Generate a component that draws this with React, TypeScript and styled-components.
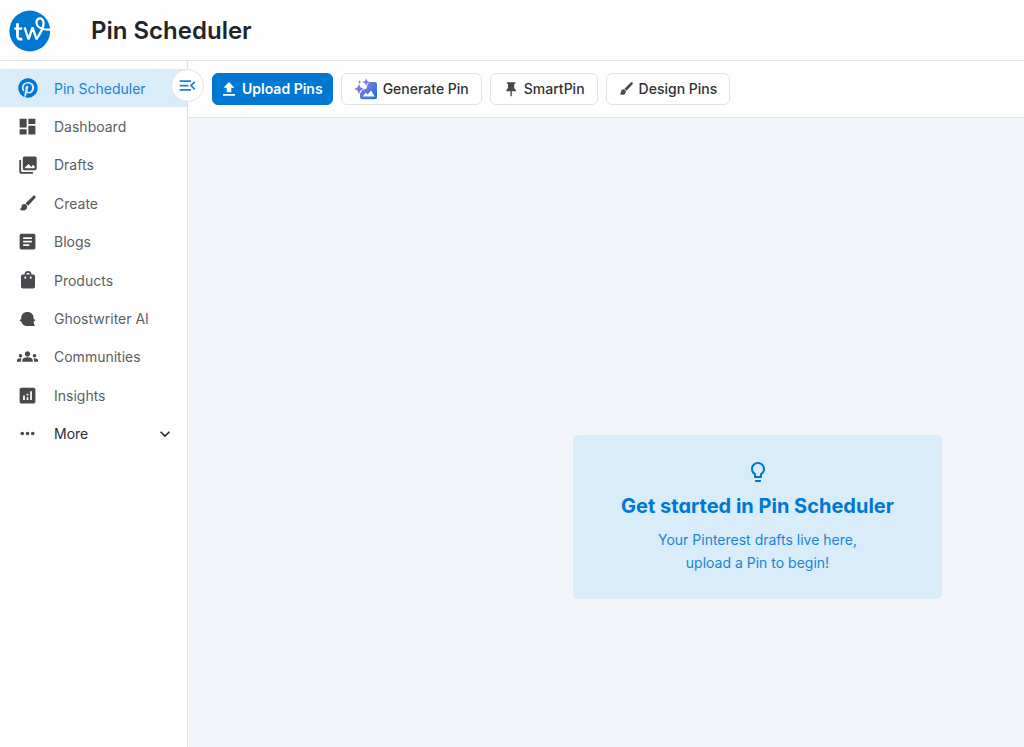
import React from "react";
import styled, { createGlobalStyle, css } from "styled-components";
import {
  MdAnalytics,
  MdArticle,
  MdDashboard,
  MdGroups,
  MdKeyboardArrowDown,
  MdMenuOpen,
  MdMoreHoriz,
  MdOutlineLightbulb,
} from "react-icons/md";
import { FaPinterest } from "react-icons/fa";

const blue = "#0077d0";
const paleBlue = "#d8ecfa";
const line = "#dfe2e6";
const iconGrey = "#47494c";

const GlobalStyle = createGlobalStyle`
  *, *::before, *::after { box-sizing: border-box; }
  body {
    margin: 0;
    background: #fefefe;
    color: #222528;
    font-family: Inter, "Liberation Sans", sans-serif;
    font-size: 14px;
    -webkit-font-smoothing: antialiased;
  }
  svg { display: block; flex: none; }
`;

const Page = styled.div`
  min-height: 100vh;
  display: flex;
  flex-direction: column;
`;

const Header = styled.header`
  height: 61px;
  padding: 1px 0 0 9px;
  display: flex;
  align-items: center;
  gap: 40px;
  border-bottom: 1px solid ${line};
`;

const PageTitle = styled.h1`
  margin: 0;
  font-size: 24px;
  line-height: 32px;
  font-weight: 600;
  font-feature-settings: "cv11";
`;

const Body = styled.div`
  flex: 1;
  display: flex;
`;

const Sidebar = styled.aside`
  position: relative;
  flex: none;
  width: 188px;
  padding-top: 8px;
  border-right: 1px solid ${line};
`;

const NavList = styled.ul`
  margin: 0;
  padding: 0;
  list-style: none;
  height: 384px;
  display: grid;
  grid-auto-rows: 1fr;
`;

const navRow = css`
  width: 100%;
  height: 100%;
  padding: 0 12px 0 17px;
  display: flex;
  align-items: center;
  gap: 16px;
  font: inherit;
  text-align: left;
  text-decoration: none;
  border: 0;
`;

const NavLink = styled.a<{ $active?: boolean }>`
  ${navRow}
  color: ${(p) => (p.$active ? "#1a84d5" : "#5b5e61")};
  background: ${(p) => (p.$active ? paleBlue : "transparent")};
`;

const NavButton = styled.button`
  ${navRow}
  color: #2c2e31;
  background: transparent;
  cursor: pointer;
`;

const NavIcon = styled.span<{ $active?: boolean }>`
  width: 21px;
  display: flex;
  justify-content: center;
  color: ${(p) => (p.$active ? blue : iconGrey)};
`;

const NavLabel = styled.span`
  flex: 1;
`;

const CollapseButton = styled.button`
  position: absolute;
  top: 8px;
  right: -17px;
  width: 33px;
  height: 33px;
  padding: 0;
  display: flex;
  align-items: center;
  justify-content: center;
  color: #1a84d5;
  background: #fff;
  border: 1px solid ${line};
  border-radius: 50%;
  cursor: pointer;
`;

const Content = styled.div`
  flex: 1;
  min-width: 0;
  display: flex;
  flex-direction: column;
`;

const Toolbar = styled.div`
  padding: 12px 24px;
  display: flex;
  gap: 8px;
  border-bottom: 1px solid ${line};
`;

const ToolButton = styled.button<{ $primary?: boolean }>`
  height: 32px;
  padding: 0 ${(p) => (p.$primary ? 9 : 12)}px 1px;
  display: flex;
  align-items: center;
  gap: ${(p) => (p.$primary ? 6 : 5)}px;
  font: inherit;
  font-weight: ${(p) => (p.$primary ? 600 : 500)};
  white-space: nowrap;
  color: ${(p) => (p.$primary ? "#fff" : "#2f3235")};
  background: ${(p) => (p.$primary ? blue : "#fff")};
  border: 1px solid ${(p) => (p.$primary ? blue : line)};
  border-radius: 6px;
  cursor: pointer;

  svg { color: ${(p) => (p.$primary ? "#fff" : iconGrey)}; }
`;

const Board = styled.main`
  flex: 1;
  padding: 317px 82px 40px 24px;
  display: flex;
  align-items: flex-start;
  justify-content: flex-end;
  background: #f2f5f9;
`;

const EmptyCard = styled.section`
  width: 369px;
  padding: 25px 24px;
  display: flex;
  flex-direction: column;
  align-items: center;
  text-align: center;
  color: ${blue};
  background: ${paleBlue};
  border-radius: 5px;
`;

const CardTitle = styled.h2`
  margin: 8px 0;
  font-size: 20px;
  line-height: 28px;
  font-weight: 700;
  font-feature-settings: "cv11";
`;

const CardText = styled.p`
  margin: 0;
  line-height: 23px;
  color: #1a84d5;
`;

const Logo = () => (
  <svg width="42" height="42" viewBox="0 0 42 42" role="img" aria-label="Tailwind">
    <circle cx="20.800" cy="21" r="20.400" fill={blue} />
    <g fill="none" stroke="#fff" strokeWidth="2.800" strokeLinejoin="round">
      <path d="M8.500 13.300v12.300c0 3.200 1.600 4 4.800 3.300" />
      <path d="M5.300 18.600h7.900" strokeWidth="2.400" />
      <path d="M15.600 17.300l3.700 11.400h.5l3.500-10.500h.5l3.500 10.500h.5C31 24 34.700 18.500 34.600 13.300c0-3.500-2-5.200-4.200-4.800-3 .5-3.700 4.200-2.100 7 2 3.300 6 4.200 12.700 4.200" strokeWidth="2.300" />
    </g>
  </svg>
);

const BrushIcon = ({ size }: { size: number }) => (
  <svg width={size} height={size} viewBox="0 0 24 24" fill="currentColor">
    <path d="M21.600 2.500c.8.8.8 1.900.1 2.700l-9.600 10.300-3.400-3.300L18.900 2.500c.8-.8 1.900-.8 2.700 0z" />
    <path d="M7.100 13.300c2.100 0 3.800 1.700 3.800 3.800 0 2.900-2.300 5-5.300 5-1.900 0-3.500-.8-4.600-2.100 1.500 0 2.300-1.100 2.300-2.900 0-2.100 1.700-3.800 3.800-3.800z" />
  </svg>
);

const DraftsIcon = () => (
  <svg width="20" height="20" viewBox="0 0 20 20" fill="currentColor">
    <path fillRule="evenodd" d="M6.500 1.500h10.500a1.700 1.700 0 0 1 1.700 1.700v10.300a1.700 1.700 0 0 1-1.700 1.700H6.500a1.700 1.700 0 0 1-1.700-1.700V3.200a1.700 1.700 0 0 1 1.700-1.700zM7 13.200h9.700v-1.600l-1.600-1.800-1.800 2.200-2.600-3-3.700 3.300z" />
    <path d="M1.300 5h1.800v11.900H15v1.800H3a1.700 1.700 0 0 1-1.700-1.700z" />
  </svg>
);

const BagIcon = () => (
  <svg width="20" height="20" viewBox="0 0 20 20" fill="currentColor">
    <path fillRule="evenodd" d="M6.500 4.500a3.500 3.500 0 0 1 7 0h1.800A1.700 1.700 0 0 1 17 6.200v10.600a1.700 1.700 0 0 1-1.700 1.700H4.700A1.700 1.700 0 0 1 3 16.800V6.200A1.700 1.700 0 0 1 4.700 4.500zm1.700 0h3.600a1.800 1.800 0 0 0-3.600 0zM6.500 6.500v2.200h1.600V6.500zm5.400 0v2.200h1.600V6.500z" />
  </svg>
);

const GhostIcon = () => (
  <svg width="20" height="20" viewBox="0 0 20 20" fill="currentColor">
    <path d="M9.400 3c3.800 0 6.200 2.500 6.200 5.900v1.300l1.300.4c.5.200.5.700.2 1l-1.500 1.200c0 1.300.3 2.300 1 3.200.3.500 0 .9-.5.900H9c-2.700 0-4.800-1.300-5.500-4.200l-1.600-.9c-.5-.3-.4-1 .1-1.100l1.200-.4V8.900c0-3.400 2.500-5.900 6.200-5.900z" />
  </svg>
);

const PinIcon = () => (
  <svg width="16" height="16" viewBox="0 0 16 16" fill="currentColor">
    <path d="M3.800 1.200h8.600v1.600h-1.200v4.200l1.700 1.900v1.400H8.800v4.400L8.100 15.400l-.7-.7v-4.400H3.300V8.900L5 7V2.800H3.800z" />
  </svg>
);

const GenerateIcon = () => (
  <svg width="24" height="22" viewBox="0 0 24 22">
    <defs>
      <linearGradient id="generate-fill" x1="0" y1="0" x2="24" y2="22" gradientUnits="userSpaceOnUse">
        <stop offset="0.150" stopColor="#a27cf0" />
        <stop offset="0.850" stopColor="#2b74d2" />
      </linearGradient>
    </defs>
    <g fill="url(#generate-fill)">
      <path
        fillRule="evenodd"
        d="M15.500 4H21a2 2 0 0 1 2 2v13.200a2 2 0 0 1-2 2H8a2 2 0 0 1-2-2v-3.700l2.500-3.500 4-1.500 1-4zM8.700 18.500h12.100L17 12.600l-3.300 4-1.900-2.200z"
      />
      <path d="M5 6l1.500 3.300L9.800 11 6.500 12.600 5 16l-1.500-3.400L.3 11l3.200-1.700z" />
      <path d="M12.200.4l1.100 2.500 2.500 1.100-2.500 1.200-1.100 2.500-1.200-2.500L8.500 4 11 2.900z" />
      <path d="M5.500 2.200l.6 1.300 1.300.6-1.300.6-.6 1.300-.6-1.300-1.300-.6 1.300-.6z" />
    </g>
  </svg>
);

const navItems = [
  { label: "Pin Scheduler", icon: <FaPinterest size={20} />, active: true },
  { label: "Dashboard", icon: <MdDashboard size={21} /> },
  { label: "Drafts", icon: <DraftsIcon /> },
  { label: "Create", icon: <BrushIcon size={18} /> },
  { label: "Blogs", icon: <MdArticle size={21} /> },
  { label: "Products", icon: <BagIcon /> },
  { label: "Ghostwriter AI", icon: <GhostIcon /> },
  { label: "Communities", icon: <MdGroups size={21} /> },
  { label: "Insights", icon: <MdAnalytics size={21} /> },
];

export default function App() {
  return (
    <Page>
      <GlobalStyle />
      <Header>
        <Logo />
        <PageTitle>Pin Scheduler</PageTitle>
      </Header>
      <Body>
        <Sidebar>
          <nav aria-label="Main">
            <NavList>
              {navItems.map((item) => (
                <li key={item.label}>
                  <NavLink href="#" $active={item.active} aria-current={item.active ? "page" : undefined}>
                    <NavIcon $active={item.active}>{item.icon}</NavIcon>
                    <NavLabel>{item.label}</NavLabel>
                  </NavLink>
                </li>
              ))}
              <li>
                <NavButton type="button" aria-expanded={false}>
                  <NavIcon>
                    <MdMoreHoriz size={21} />
                  </NavIcon>
                  <NavLabel>More</NavLabel>
                  <MdKeyboardArrowDown size={20} />
                </NavButton>
              </li>
            </NavList>
          </nav>
          <CollapseButton type="button" aria-label="Collapse menu">
            <MdMenuOpen size={21} />
          </CollapseButton>
        </Sidebar>
        <Content>
          <Toolbar>
            <ToolButton type="button" $primary>
              <svg width="14" height="16" viewBox="0 0 14 16" fill="currentColor">
                <path d="M7 1l5.500 5.700H9.300v4.500H4.700V6.700H1.500zM1 13h12v1.800H1z" />
              </svg>
              Upload Pins
            </ToolButton>
            <ToolButton type="button">
              <GenerateIcon />
              Generate Pin
            </ToolButton>
            <ToolButton type="button">
              <PinIcon />
              SmartPin
            </ToolButton>
            <ToolButton type="button">
              <BrushIcon size={15} />
              Design Pins
            </ToolButton>
          </Toolbar>
          <Board>
            <EmptyCard>
              <MdOutlineLightbulb size={24} />
              <CardTitle>Get started in Pin Scheduler</CardTitle>
              <CardText>
                Your Pinterest drafts live here,
                <br />
                upload a Pin to begin!
              </CardText>
            </EmptyCard>
          </Board>
        </Content>
      </Body>
    </Page>
  );
}
